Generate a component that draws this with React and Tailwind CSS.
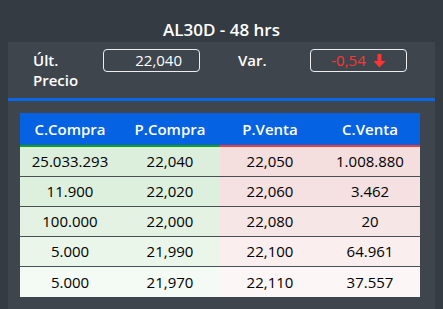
import React from "react";

const rows = [
  ["25.033.293", "22,040", "22,050", "1.008.880", "bg-[#dcefdc]", "bg-[#f4dede]"],
  ["11.900", "22,020", "22,060", "3.462", "bg-[#ddf0dd]", "bg-[#f5e1e1]"],
  ["100.000", "22,000", "22,080", "20", "bg-[#e3f2e3]", "bg-[#f7e6e6]"],
  ["5.000", "21,990", "22,100", "64.961", "bg-[#ebf6eb]", "bg-[#faeeee]"],
  ["5.000", "21,970", "22,110", "37.557", "bg-[#f4faf4]", "bg-[#fcf6f6]"],
];

export default function App() {
  return (
    <div
      className="w-[443px] h-[309px] bg-[#353b43] overflow-hidden flex flex-col"
      style={{ fontFamily: '"Open Sans", "Noto Sans", sans-serif' }}
    >
      <div className="h-[42px] flex items-end justify-center">
        <span className="text-white text-[17px] font-semibold leading-[24px]">AL30D - 48 hrs</span>
      </div>
      <div className="mx-2 flex-1 bg-[#3e454d] flex flex-col">
        <div className="h-[56px] flex items-start pt-[7px] pl-[25px]">
          <div className="w-[70px] text-white text-[15px] font-semibold leading-[20px] pt-[1px]">
            Últ.
            <br />
            Precio
          </div>
          <div className="w-[97px] h-[23px] border border-white/90 rounded-[4px] flex items-center justify-end pr-[17px] text-white text-[15px] leading-none">
            22,040
          </div>
          <div className="w-[38px]" />
          <div className="w-[72px] text-white text-[15px] font-semibold leading-[20px] pt-[1px]">Var.</div>
          <div className="w-[97px] h-[23px] border border-white/90 rounded-[4px] flex items-center justify-center gap-[7px] text-[#ff3535] text-[15px] leading-none">
            <span>-0,54</span>
            <svg width="13" height="14" viewBox="0 0 13 14" className="mt-[1px]">
              <path d="M4.5 0h4v7h4L6.5 13.5 0.5 7h4z" fill="#ff3535" />
            </svg>
          </div>
        </div>
        <div className="h-[3px] bg-[#0a68e8]" />
        <div className="px-3 pt-3">
          <div className="w-[400px]">
            <div className="flex h-[32px] bg-[#0563e3] text-white text-[15px] font-semibold">
              {["C.Compra", "P.Compra", "P.Venta", "C.Venta"].map((h) => (
                <div key={h} className="w-[100px] flex items-center justify-center">
                  {h}
                </div>
              ))}
            </div>
            <div className="flex h-[2px]">
              <div className="w-[200px] bg-[#14a014]" />
              <div className="w-[200px] bg-[#ee3b3b]" />
            </div>
            {rows.map((r, i) => (
              <div
                key={i}
                className={`flex h-[30px] text-black text-[15px] ${i < 4 ? "border-b border-[#4a4f55]" : ""}`}
              >
                <div className={`w-[200px] flex ${r[4]}`}>
                  <div className="w-[100px] flex items-center justify-center">{r[0]}</div>
                  <div className="w-[100px] flex items-center justify-center">{r[1]}</div>
                </div>
                <div className={`w-[200px] flex ${r[5]}`}>
                  <div className="w-[100px] flex items-center justify-center">{r[2]}</div>
                  <div className="w-[100px] flex items-center justify-center">{r[3]}</div>
                </div>
              </div>
            ))}
          </div>
        </div>
      </div>
    </div>
  );
}
